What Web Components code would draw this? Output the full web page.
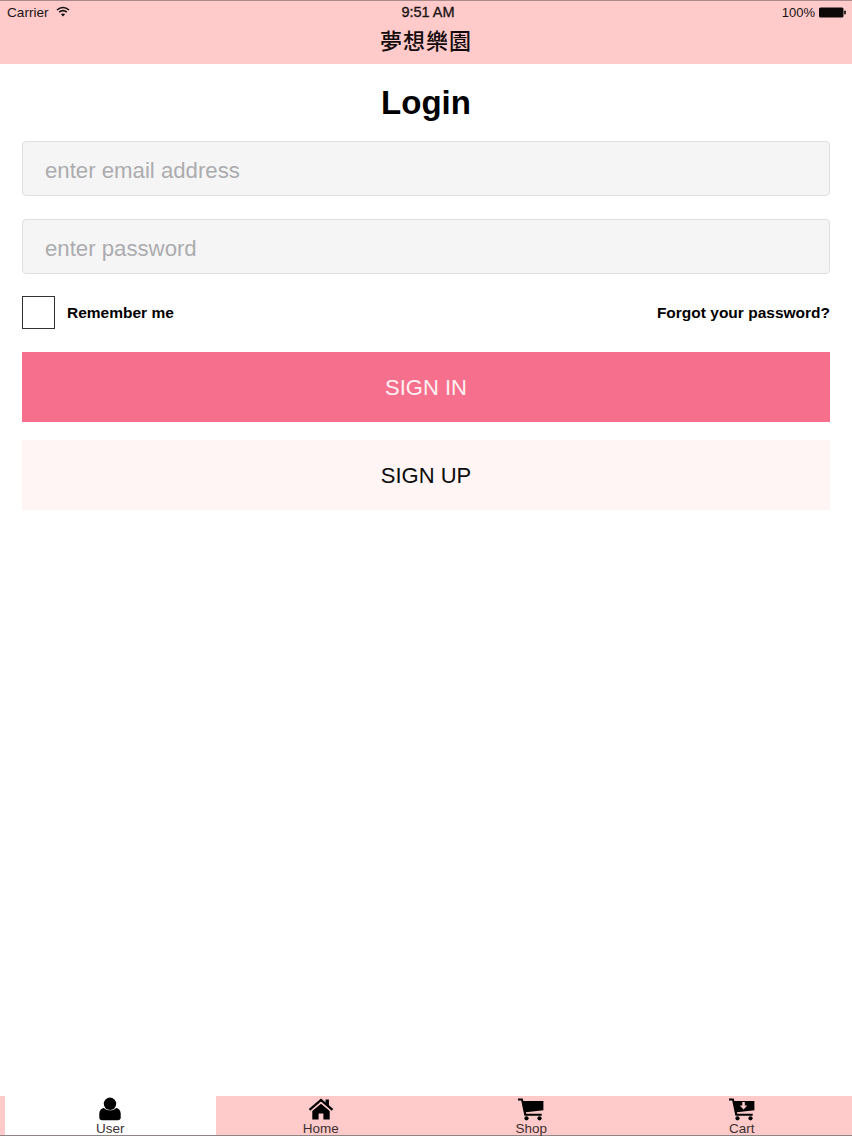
<!DOCTYPE html>
<html lang="zh-Hant">
<head>
<meta charset="utf-8">
<title>Login</title>
<style>
  html, body { margin: 0; height: 100%; background: #fff; }
  body { font-family: "Liberation Sans", Arial, "Noto Sans CJK TC", sans-serif; color: #000; }
</style>
</head>
<body>
<app-screen>
  <status-bar slot="top"></status-bar>
  <nav-bar slot="top">夢想樂園</nav-bar>
  <login-form></login-form>
  <tab-bar slot="bottom">
    <tab-item label="User" icon="user" active></tab-item>
    <tab-item label="Home" icon="home"></tab-item>
    <tab-item label="Shop" icon="shop"></tab-item>
    <tab-item label="Cart" icon="cart"></tab-item>
  </tab-bar>
</app-screen>

<script>
// Layout raiz: barras arriba y abajo, contenido en medio
class AppScreen extends HTMLElement {
  constructor() {
    super();
    this.attachShadow({ mode: 'open' }).innerHTML = `
      <style>
        :host { display: flex; flex-direction: column; height: 1136px; overflow: hidden; }
        main { flex: 1; }
      </style>
      <slot name="top"></slot>
      <main><slot></slot></main>
      <slot name="bottom"></slot>
    `;
  }
}

class StatusBar extends HTMLElement {
  constructor() {
    super();
    this.attachShadow({ mode: 'open' }).innerHTML = `
      <style>
        :host {
          display: grid;
          grid-template-columns: 1fr auto 1fr;
          align-items: center;
          height: 23px;
          box-sizing: border-box;
          padding: 0 6px 0 7px;
          background: #ffcaca;
          border-top: 1px solid #a98a8a;
          font-size: 13px;
          color: #1c1414;
        }
        .left { display: flex; align-items: center; gap: 7px; font-size: 13.6px; }
        .right { display: flex; align-items: center; justify-content: flex-end; gap: 3px; }
        .time { padding-left: 3px; font-size: 14.5px; -webkit-text-stroke: .35px #1c1414; }
        svg { display: block; }
      </style>
      <div class="left">
        <span>Carrier</span>
        <svg width="14" height="11" viewBox="0 0 14 11" style="margin-top:-2px">
          <path d="M1 4C4.6.8 9.4.8 13 4" fill="none" stroke="#111" stroke-width="1.6"/>
          <path d="M3.2 6.2c2.3-2 5.300-2 7.600 0" fill="none" stroke="#111" stroke-width="1.6"/>
          <path d="M7 10.6 4.900 8.300c1.200-1 3-1 4.200 0z" fill="#111"/>
        </svg>
      </div>
      <div class="time">9:51 AM</div>
      <div class="right">
        <span>100%</span>
        <svg width="28" height="11" viewBox="0 0 28 11">
          <rect x="1" y="0.5" width="24.5" height="10" rx="1.5" fill="#0c0808"/>
          <rect x="26.2" y="3.5" width="1.6" height="4" rx=".7" fill="#0c0808"/>
        </svg>
      </div>
    `;
  }
}

class NavBar extends HTMLElement {
  constructor() {
    super();
    this.attachShadow({ mode: 'open' }).innerHTML = `
      <style>
        :host {
          display: flex;
          align-items: center;
          justify-content: center;
          height: 41px;
          padding-bottom: 10px;
          box-sizing: border-box;
          background: #ffcaca;
          font-family: "Noto Sans CJK TC", sans-serif;
          font-size: 22px;
          font-weight: 500;
          letter-spacing: 1px;
          color: #140c0c;
        }
      </style>
      <slot></slot>
    `;
  }
}

// Campo con texto de ayuda
class TextField extends HTMLElement {
  constructor() {
    super();
    this.attachShadow({ mode: 'open' }).innerHTML = `
      <style>
        :host {
          display: flex;
          align-items: center;
          height: 55px;
          box-sizing: border-box;
          padding: 4px 22px 0;
          background: #f5f5f6;
          border: 1px solid #dfdfe1;
          border-radius: 4px;
          font-size: 22.2px;
          color: #acacae;
        }
      </style>
      <slot></slot>
    `;
  }
}

class AppButton extends HTMLElement {
  constructor() {
    super();
    this.attachShadow({ mode: 'open' }).innerHTML = `
      <style>
        :host {
          display: flex;
          align-items: center;
          justify-content: center;
          height: 70px;
          box-sizing: border-box;
          padding-top: 2px;
          font-size: 22px;
          background: #fff5f5;
          color: #0c0c0c;
        }
        :host([primary]) { background: #f66f8c; color: #fff1f3; }
      </style>
      <slot></slot>
    `;
  }
}

class LoginForm extends HTMLElement {
  constructor() {
    super();
    this.attachShadow({ mode: 'open' }).innerHTML = `
      <style>
        :host { display: block; padding: 0 22px; }
        h1 {
          margin: 0;
          height: 77px;
          box-sizing: border-box;
          padding-top: 1px;
          display: flex;
          align-items: center;
          justify-content: center;
          font-size: 33px;
          font-weight: 700;
          color: #000;
        }
        .second { margin-top: 23px; }
        .row {
          display: flex;
          align-items: center;
          justify-content: space-between;
          margin: 22px 0 23px;
          height: 33px;
          font-size: 15.5px;
          font-weight: 700;
        }
        .remember { display: flex; align-items: center; gap: 12px; }
        .box { width: 33px; height: 33px; box-sizing: border-box; border: 1.5px solid #333; background: #fff; }
        .up { margin-top: 18px; }
      </style>
      <h1>Login</h1>
      <text-field>enter email address</text-field>
      <text-field class="second">enter password</text-field>
      <div class="row">
        <div class="remember"><div class="box"></div><span>Remember me</span></div>
        <span>Forgot your password?</span>
      </div>
      <app-button primary>SIGN IN</app-button>
      <app-button class="up">SIGN UP</app-button>
    `;
  }
}

class TabBar extends HTMLElement {
  constructor() {
    super();
    this.attachShadow({ mode: 'open' }).innerHTML = `
      <style>
        :host {
          display: grid;
          grid-template-columns: repeat(4, 1fr);
          height: 40px;
          box-sizing: border-box;
          padding: 0 5px;
          background: #ffcaca;
          border-bottom: 1px solid #8f8585;
        }
      </style>
      <slot></slot>
    `;
  }
}

const TAB_ICONS = {
  user: `<svg width="26" height="24" viewBox="0 0 26 24">
      <circle cx="13" cy="6.800" r="6.200"/>
      <path d="M2.300 20.800v-4.200c0-3 2-5.200 4.600-5.600 1.500 1.500 3.600 2.300 6.100 2.300s4.600-.8 6.100-2.300c2.600.4 4.600 2.600 4.600 5.600v4.200c0 1.600-1.200 2.400-2.700 2.400H5c-1.500 0-2.700-.8-2.700-2.400z"/>
    </svg>`,
  home: `<svg width="26" height="24" viewBox="0 0 26 24">
      <path d="M13 1.500.8 12l1.400 1.700L13 4.500l10.800 9.200 1.400-1.700-4.300-3.700V2.600h-3.300v2.900z"/>
      <path d="M4.300 14.100 13 6.800l8.700 7.300v8.300h-6.300v-6h-4.800v6H4.300z"/>
    </svg>`,
  shop: `<svg width="26" height="24" viewBox="0 0 26 24">
      <path d="M0 1.500h4.600l.8 2.500h20v9.200L7.800 15.200l.4 1.500h15.500v2H6.400L3.200 3.500H0z"/>
      <circle cx="8.500" cy="21.300" r="2.100"/><circle cx="21.500" cy="21.300" r="2.100"/>
    </svg>`,
  cart: `<svg width="26" height="24" viewBox="0 0 26 24">
      <path d="M0 1.500h4.600l.8 2.500h20v9.200L7.800 15.200l.4 1.500h15.500v2H6.400L3.200 3.500H0z"/>
      <path d="M13.300 5h2.500v3.600h2.500l-3.750 3.900-3.750-3.900h2.500z" fill="#ffcaca"/>
      <circle cx="8.500" cy="21.300" r="2.100"/><circle cx="21.500" cy="21.300" r="2.100"/>
    </svg>`
};

class TabItem extends HTMLElement {
  constructor() {
    super();
    this.attachShadow({ mode: 'open' });
  }

  connectedCallback() {
    this.shadowRoot.innerHTML = `
      <style>
        :host {
          display: flex;
          flex-direction: column;
          align-items: center;
          min-width: 0;
          font-size: 13.5px;
          line-height: 13px;
          color: #3a3030;
        }
        :host([active]) { background: #fff; }
        svg { display: block; margin-top: 1px; flex: none; fill: #000; }
        span { margin-top: 1px; flex: none; }
      </style>
      ${TAB_ICONS[this.getAttribute('icon')] || ''}
      <span>${this.getAttribute('label') || ''}</span>
    `;
  }
}

customElements.define('app-screen', AppScreen);
customElements.define('status-bar', StatusBar);
customElements.define('nav-bar', NavBar);
customElements.define('text-field', TextField);
customElements.define('app-button', AppButton);
customElements.define('login-form', LoginForm);
customElements.define('tab-bar', TabBar);
customElements.define('tab-item', TabItem);
</script>
</body>
</html>
